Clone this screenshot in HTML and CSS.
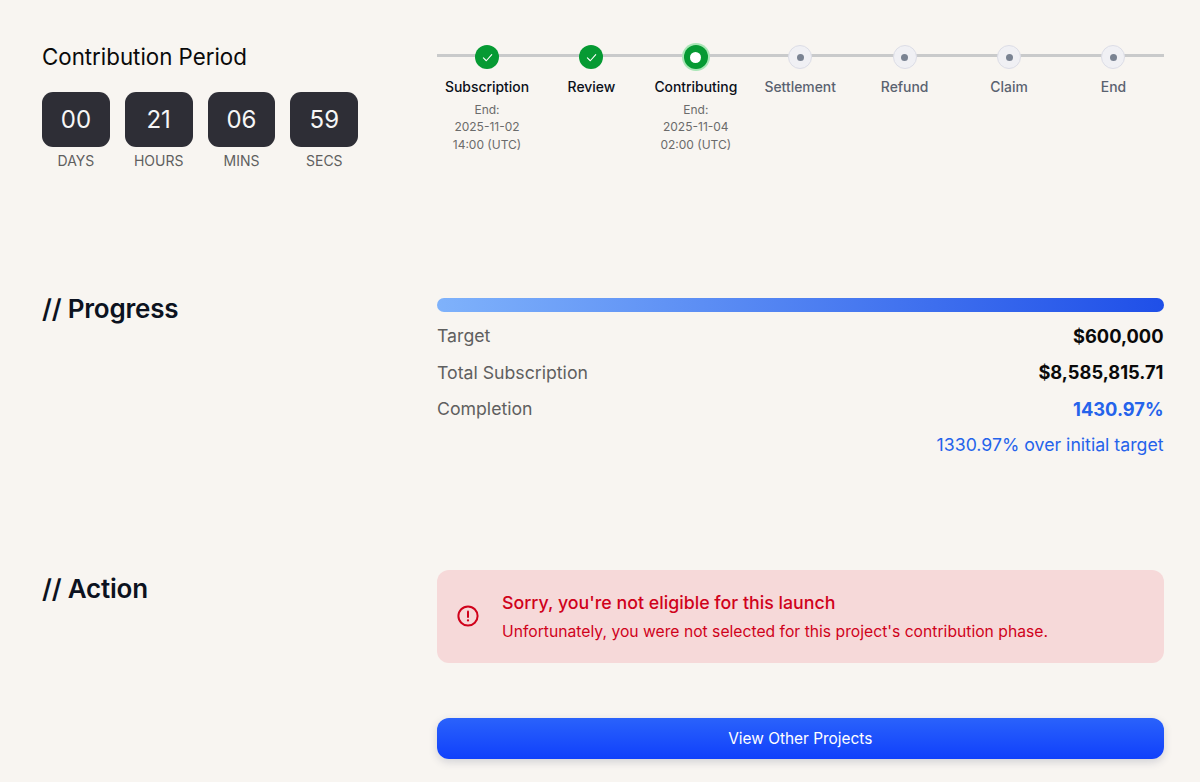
FILE: index.html
```html
<!DOCTYPE html>
<html lang="en">
<head>
<meta charset="utf-8">
<title>Contribution</title>
<link rel="stylesheet" href="styles.css">
</head>
<body>
<main class="page">
  <section class="row row-period">
    <div class="side">
      <h2 class="period-title">Contribution Period</h2>
      <div class="countdown">
        <div class="unit"><div class="box">00</div><div class="unit-label">DAYS</div></div>
        <div class="unit"><div class="box">21</div><div class="unit-label">HOURS</div></div>
        <div class="unit"><div class="box">06</div><div class="unit-label">MINS</div></div>
        <div class="unit"><div class="box">59</div><div class="unit-label">SECS</div></div>
      </div>
    </div>
    <div class="main">
      <div class="stepper">
        <div class="track"></div>
        <div class="step">
          <div class="dot dot-done"><svg viewBox="0 0 12 12" width="13" height="13"><path d="M2.2 6.3 4.9 9 9.9 3.4" fill="none" stroke="#fff" stroke-width="1" stroke-linecap="round" stroke-linejoin="round"/></svg></div>
          <div class="step-name active">Subscription</div>
          <div class="step-meta">End:<br>2025-11-02<br>14:00 (UTC)</div>
        </div>
        <div class="step">
          <div class="dot dot-done"><svg viewBox="0 0 12 12" width="13" height="13"><path d="M2.2 6.3 4.9 9 9.9 3.4" fill="none" stroke="#fff" stroke-width="1" stroke-linecap="round" stroke-linejoin="round"/></svg></div>
          <div class="step-name active">Review</div>
        </div>
        <div class="step">
          <div class="dot dot-current"><span class="inner-white"></span></div>
          <div class="step-name active">Contributing</div>
          <div class="step-meta">End:<br>2025-11-04<br>02:00 (UTC)</div>
        </div>
        <div class="step"><div class="dot dot-todo"><span class="inner-grey"></span></div><div class="step-name">Settlement</div></div>
        <div class="step"><div class="dot dot-todo"><span class="inner-grey"></span></div><div class="step-name">Refund</div></div>
        <div class="step"><div class="dot dot-todo"><span class="inner-grey"></span></div><div class="step-name">Claim</div></div>
        <div class="step"><div class="dot dot-todo"><span class="inner-grey"></span></div><div class="step-name">End</div></div>
      </div>
    </div>
  </section>

  <section class="row row-progress">
    <div class="side"><h2 class="section-title">// Progress</h2></div>
    <div class="main">
      <div class="bar"></div>
      <div class="stat"><span class="stat-label">Target</span><span class="stat-value">$600,000</span></div>
      <div class="stat"><span class="stat-label">Total Subscription</span><span class="stat-value">$8,585,815.71</span></div>
      <div class="stat"><span class="stat-label">Completion</span><span class="stat-value blue">1430.97%</span></div>
      <div class="over">1330.97% over initial target</div>
    </div>
  </section>

  <section class="row row-action">
    <div class="side"><h2 class="section-title">// Action</h2></div>
    <div class="main">
      <div class="alert">
        <svg class="alert-icon" viewBox="0 0 24 24" width="24" height="24"><circle cx="12" cy="12" r="9.6" fill="none" stroke="#d0021b" stroke-width="2"/><path d="M12 7.4v5.6" fill="none" stroke="#d0021b" stroke-width="2" stroke-linecap="round"/><circle cx="12" cy="16.4" r="1.15" fill="#d0021b"/></svg>
        <div>
          <div class="alert-title">Sorry, you're not eligible for this launch</div>
          <div class="alert-text">Unfortunately, you were not selected for this project's contribution phase.</div>
        </div>
      </div>
      <button class="cta">View Other Projects</button>
    </div>
  </section>
</main>
</body>
</html>
```

FILE: styles.css
```css
* { box-sizing: border-box; }
html, body { margin: 0; padding: 0; }
body {
  background: #f8f5f1;
  font-family: Inter, "Liberation Sans", sans-serif;
  color: #0b0f19;
  height: 782px;
  overflow: hidden;
}
.page { padding: 0 36.5px 0 42px; }
.row { display: flex; }
.side { width: 395px; flex: none; }
.main { flex: 1; min-width: 0; }

.row-period { padding-top: 43px; height: 297px; }
.period-title { margin: 0 0 21px; font-size: 22.3px; line-height: 28px; font-weight: 400; color: #0a0a0a; }
.countdown { display: flex; gap: 15px; }
.unit { width: 67.8px; text-align: center; }
.box {
  height: 55px;
  border-radius: 11px;
  background: #2e2e36;
  color: #f6f6f6;
  font-size: 24px;
  line-height: 55px;
}
.unit-label { margin-top: 5px; font-size: 14px; line-height: 17px; color: #5f5f5f; }

.stepper { position: relative; display: flex; justify-content: space-between; margin-top: 2px; }
.track { position: absolute; left: 0; right: 0; top: 9px; height: 3px; background: #c9cacb; }
.step { position: relative; width: 100px; display: flex; flex-direction: column; align-items: center; text-align: center; }
.dot { width: 24px; height: 24px; border-radius: 50%; display: flex; align-items: center; justify-content: center; }
.dot-done { background: #069a33; }
.dot-current { background: #069a33; box-shadow: 0 0 0 2px #a9e6b6; }
.inner-white { width: 11px; height: 11px; border-radius: 50%; background: #fff; }
.dot-todo { background: #f0f0f4; border: 1px solid #dcdde6; }
.inner-grey { width: 7px; height: 7px; border-radius: 50%; background: #7a8392; }
.step-name { margin-top: 10px; font-size: 13.9px; line-height: 17px; font-weight: 450; color: #5a6270; white-space: nowrap; }
.step-name.active { color: #0b0f19; }
.step-meta { margin-top: 5px; font-size: 12px; line-height: 17.3px; color: #6b6b6b; }

.row-progress { height: 280px; }
.section-title { margin: 0; font-size: 26px; line-height: 32px; font-weight: 600; color: #0c1220; letter-spacing: -0.2px; }
.row-progress .section-title { margin-top: -4px; }
.bar {
  height: 14px;
  margin-top: 1px;
  border-radius: 7px;
  background: linear-gradient(90deg, #7fb2fb, #1f4fe8);
}
.stat { display: flex; justify-content: space-between; align-items: center; height: 36.5px; font-size: 17.7px; }
.bar + .stat { margin-top: 5.5px; }
.stat-label { color: #5f5f5f; }
.stat-value { font-size: 18.3px; font-weight: 700; color: #0a0a0a; }
.stat-value.blue { color: #2563eb; }
.over { text-align: right; font-size: 17.7px; line-height: 36.5px; color: #2563eb; }

.row-action .main { margin-top: -7.5px; }
.row-action .side { margin-top: -4px; }
.alert {
  display: flex;
  align-items: center;
  gap: 22px;
  height: 93px;
  padding: 0 19px;
  border-radius: 12px;
  background: #f6d9d9;
  color: #d0021b;
}
.alert-icon { flex: none; }
.alert-title { font-size: 17.8px; line-height: 24px; font-weight: 450; }
.alert-text { margin-top: 7px; font-size: 15.7px; line-height: 20px; }
.cta {
  display: block;
  width: 100%;
  height: 41px;
  margin-top: 55.5px;
  border: 0;
  border-radius: 12px;
  background: linear-gradient(180deg, #2a62fb, #1040fb);
  box-shadow: 0 3px 8px rgba(40, 50, 90, 0.18);
  color: #fff;
  font-family: inherit;
  font-size: 15.4px;
}
```
